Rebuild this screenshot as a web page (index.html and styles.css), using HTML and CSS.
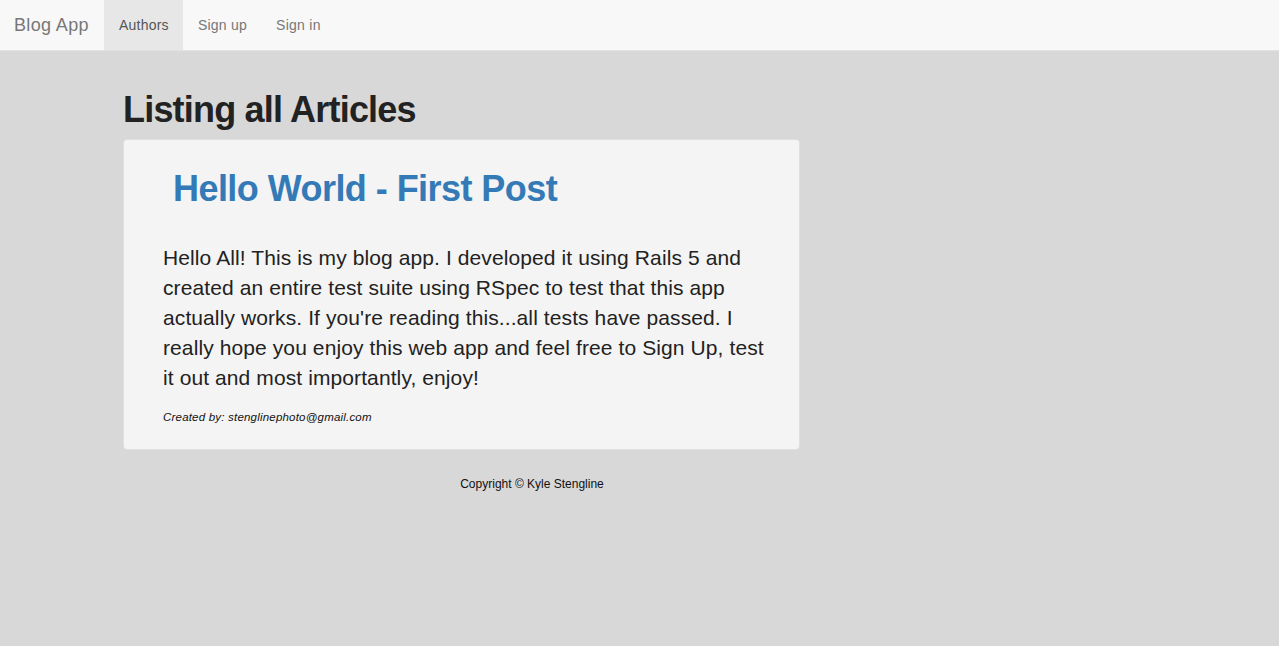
FILE: index.html
```html
<!DOCTYPE html>
<html lang="en">
<head>
<meta charset="utf-8">
<title>Blog App</title>
<link rel="stylesheet" href="styles.css">
</head>
<body>
<nav class="navbar">
  <a class="brand" href="#">Blog App</a>
  <ul class="nav">
    <li class="active"><a href="#">Authors</a></li>
    <li><a href="#">Sign up</a></li>
    <li><a href="#">Sign in</a></li>
  </ul>
</nav>
<main class="main">
  <h1 class="page-title">Listing all Articles</h1>
  <article class="card">
    <h2 class="article-title"><a href="#">Hello World - First Post</a></h2>
    <p class="article-body">Hello All! This is my blog app. I developed it using Rails 5 and created an entire test suite using RSpec to test that this app actually works. If you're reading this...all tests have passed. I really hope you enjoy this web app and feel free to Sign Up, test it out and most importantly, enjoy!</p>
    <p class="author">Created by: stenglinephoto@gmail.com</p>
  </article>
  <footer class="footer">Copyright © Kyle Stengline</footer>
</main>
</body>
</html>
```
FILE: styles.css
```css
html, body {
  margin: 0;
  padding: 0;
}
body {
  background: #d8d8d8;
  font-family: "Liberation Sans", Arial, Helvetica, sans-serif;
  color: #222;
  min-height: 646px;
}
a { text-decoration: none; }
.navbar {
  display: flex;
  align-items: stretch;
  height: 51px;
  background: #f8f8f8;
  border-bottom: 1px solid #e2e2e2;
  box-sizing: border-box;
}
.brand {
  display: block;
  padding: 0 15px 0 14px;
  font-size: 18px;
  line-height: 50px;
  letter-spacing: 0.35px;
  color: #777;
}
.nav {
  display: flex;
  list-style: none;
  margin: 0;
  padding: 0;
}
.nav li a {
  display: block;
  padding: 0 14px 0 15px;
  font-size: 14px;
  line-height: 50px;
  letter-spacing: 0.25px;
  color: #777;
}
.nav li.active a {
  background: #e7e7e7;
  color: #555;
}
.main {
  margin-left: 123px;
  width: 818px;
}
.page-title {
  margin: 0;
  padding-top: 39px;
  font-size: 36px;
  font-weight: bold;
  line-height: 40px;
  height: 49px;
  color: #222;
  letter-spacing: -0.8px;
}
.card {
  width: 677px;
  box-sizing: border-box;
  background: #f4f4f4;
  border: 1px solid #e0e0e0;
  border-radius: 4px;
  padding: 27px 30px 26px 39px;
  height: 311px;
}
.article-title {
  margin: 0 0 0 10px;
  font-size: 36px;
  font-weight: bold;
  line-height: 44px;
  letter-spacing: -0.55px;
}
.article-title a { color: #337ab7; }
.article-body {
  margin: 32px 0 0;
  font-size: 21px;
  line-height: 30px;
  letter-spacing: 0.1px;
  color: #222;
}
.author {
  margin: 16px 0 0;
  font-size: 11.5px;
  font-style: italic;
  line-height: 16px;
  letter-spacing: 0.2px;
  color: #111;
}
.footer {
  padding-top: 26px;
  text-align: center;
  font-size: 12px;
  line-height: 16px;
  color: #111;
}
```
